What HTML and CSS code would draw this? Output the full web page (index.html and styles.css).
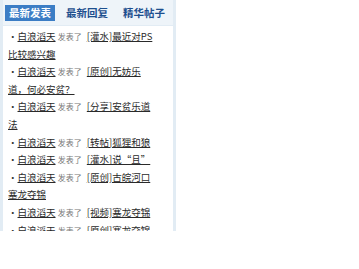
FILE: index.html
```html
<!DOCTYPE html>
<html lang="zh-CN">
<head>
    <meta charset="UTF-8">
    <title>最新发表</title>
    <link rel="stylesheet" href="styles.css">
</head>
<body>
    <div class="box">
        <div class="tabs">
            <span class="tab on">最新发表</span>
            <span class="tab">最新回复</span>
            <span class="tab">精华帖子</span>
        </div>
        <ul class="posts">
            <li><span class="dot">·</span><a href="#">白浪滔天</a> <span class="say">发表了</span> <a href="#">[灌水]最近对PS比较感兴趣</a></li>
            <li><span class="dot">·</span><a href="#">白浪滔天</a> <span class="say">发表了</span> <a href="#">[原创]无妨乐道，何必安贫？</a></li>
            <li><span class="dot">·</span><a href="#">白浪滔天</a> <span class="say">发表了</span> <a href="#">[分享]安贫乐道法</a></li>
            <li><span class="dot">·</span><a href="#">白浪滔天</a> <span class="say">发表了</span> <a href="#">[转帖]狐狸和狼</a></li>
            <li><span class="dot">·</span><a href="#">白浪滔天</a> <span class="say">发表了</span> <a href="#">[灌水]说“且”</a></li>
            <li><span class="dot">·</span><a href="#">白浪滔天</a> <span class="say">发表了</span> <a href="#">[原创]古皖河口塞龙夺锦</a></li>
            <li><span class="dot">·</span><a href="#">白浪滔天</a> <span class="say">发表了</span> <a href="#">[视频]塞龙夺锦</a></li>
            <li><span class="dot">·</span><a href="#">白浪滔天</a> <span class="say">发表了</span> <a href="#">[原创]塞龙夺锦</a></li>
        </ul>
    </div>
</body>
</html>
```
FILE: styles.css
```css
*{
    font-family: "Noto Sans CJK SC", "Liberation Sans", sans-serif;
}

body{
    margin: 0;
    background-color: #fff;
}

.box{
    width: 170px;
    height: 231px;
    overflow: hidden;
    border-left: 3px solid #e2ecf4;
    border-right: 3px solid #e2ecf4;
}

.tabs{
    display: flex;
    gap: 7px;
    height: 26px;
    padding: 5px 0 0 2px;
    box-sizing: border-box;
    background-color: #eef4f9;
    border-bottom: 1px solid #e2ecf4;
}

.tab{
    height: 16px;
    line-height: 16px;
    padding: 0 4px;
    font-size: 10.5px;
    font-weight: bold;
    color: #1d4f8e;
}

.tab.on{
    background-color: #3b7dc5;
    color: #fff;
}

.posts{
    margin: 0;
    padding: 2px 19px 0 5px;
    list-style-type: none;
}

.posts li{
    font-size: 9.5px;
    line-height: 17.6px;
    color: #333;
}

.posts a{
    color: #2a2a2a;
    text-decoration: underline;
}

.dot{
    color: #333;
}

.say{
    margin-right: 3px;
    font-size: 8px;
    line-height: 1;
    color: #777;
}
```
